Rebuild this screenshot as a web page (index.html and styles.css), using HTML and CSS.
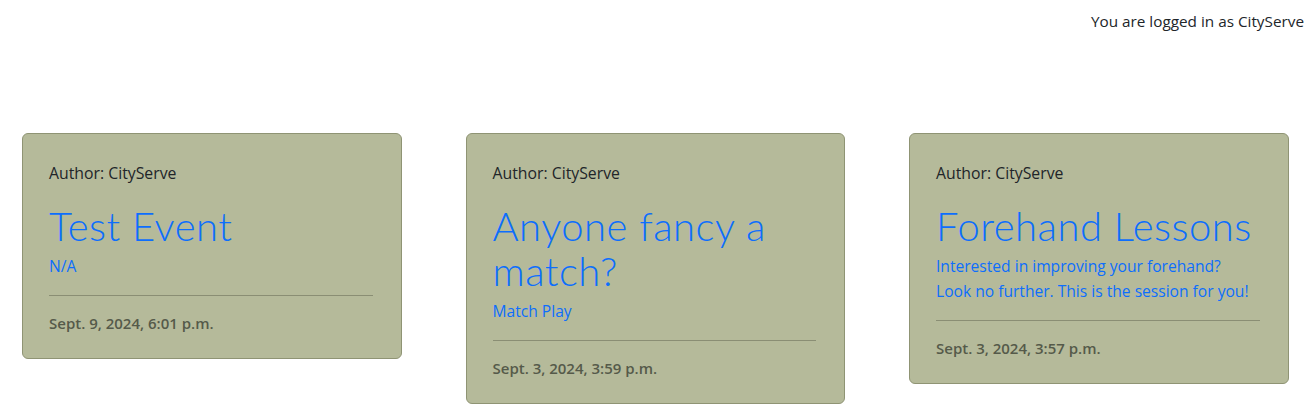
FILE: index.html
```html
<!DOCTYPE html>
<html lang="en">
<head>
<meta charset="utf-8">
<title>Events</title>
<link rel="stylesheet" href="styles.css">
</head>
<body>
<header class="topbar">
  <span class="login-note">You are logged in as CityServe</span>
</header>
<main class="cards">
  <article class="card">
    <p class="author">Author: CityServe</p>
    <h1 class="title"><a href="#">Test Event</a></h1>
    <p class="desc"><a href="#">N/A</a></p>
    <hr class="sep">
    <p class="date">Sept. 9, 2024, 6:01 p.m.</p>
  </article>
  <article class="card">
    <p class="author">Author: CityServe</p>
    <h1 class="title"><a href="#">Anyone fancy a match?</a></h1>
    <p class="desc"><a href="#">Match Play</a></p>
    <hr class="sep">
    <p class="date">Sept. 3, 2024, 3:59 p.m.</p>
  </article>
  <article class="card">
    <p class="author">Author: CityServe</p>
    <h1 class="title"><a href="#">Forehand Lessons</a></h1>
    <p class="desc"><a href="#">Interested in improving your forehand? Look no further. This is the session for you!</a></p>
    <hr class="sep">
    <p class="date">Sept. 3, 2024, 3:57 p.m.</p>
  </article>
</main>
</body>
</html>
```

FILE: styles.css
```css
* { box-sizing: border-box; }
html, body { margin: 0; padding: 0; }
body {
  font-family: "Open Sans", "Noto Sans", sans-serif;
  font-size: 16px;
  line-height: 1.5;
  color: #212529;
  background: #fff;
}
.topbar {
  display: flex;
  justify-content: flex-end;
  padding: 10px 9px 0 0;
  height: 133px;
}
.login-note { font-size: 15.3px; }
.cards {
  display: flex;
  align-items: flex-start;
  gap: 64px;
  padding-left: 22px;
}
.card {
  width: 379.5px;
  background: #b5ba9a;
  border: 1px solid #8f9474;
  border-radius: 6px;
  padding: 28px 28px 24px 26px;
}
.author { margin: 0 0 18px; font-size: 15.8px; }
.title {
  margin: 0;
  font-family: "Lato", sans-serif;
  font-weight: 300;
  font-size: 40px;
  line-height: 45px;
  letter-spacing: 0.5px;
}
.title a, .desc a { color: #0d6efd; text-decoration: none; }
.desc { margin: 5px 0 0; font-size: 15.6px; line-height: 25px; }
.sep {
  margin: 16px 0;
  border: 0;
  border-top: 1px solid #8a8e74;
}
.date { margin: 0; font-weight: 600; color: #555a4a; font-size: 15px; }
```
